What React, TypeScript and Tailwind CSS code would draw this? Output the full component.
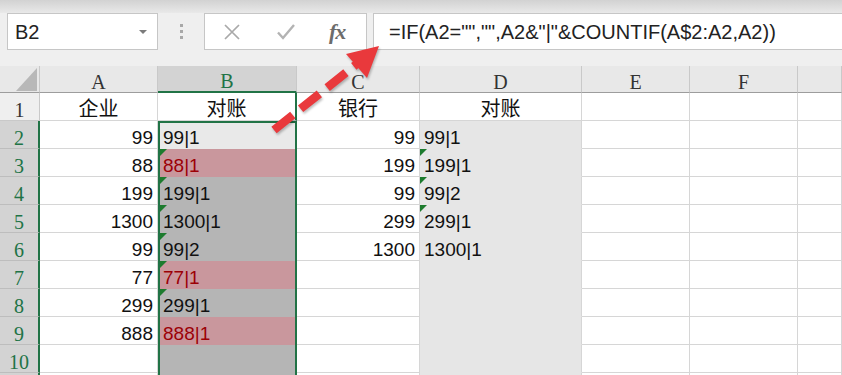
import React from 'react'

type Fill = 'active' | 'sel' | 'bad'

const colA = ['99', '88', '199', '1300', '99', '77', '299', '888', '', '']
const colB: [string, Fill, boolean][] = [
  ['99|1', 'active', false],
  ['88|1', 'bad', true],
  ['199|1', 'sel', true],
  ['1300|1', 'sel', true],
  ['99|2', 'sel', true],
  ['77|1', 'bad', true],
  ['299|1', 'sel', true],
  ['888|1', 'bad', false],
  ['', 'sel', false],
  ['', 'sel', false],
]
const colC = ['99', '199', '99', '299', '1300', '', '', '', '', '']
const colD: [string, boolean][] = [
  ['99|1', false],
  ['199|1', true],
  ['99|2', true],
  ['299|1', true],
  ['1300|1', false],
  ['', false],
  ['', false],
  ['', false],
  ['', false],
  ['', false],
]

const fillClass: Record<Fill, string> = {
  active: 'bg-[#e9e9e9] border-b-[#e9e9e9] text-[#111]',
  sel: 'bg-[#b5b5b5] border-b-[#b5b5b5] text-[#111]',
  bad: 'bg-[#c9979d] border-b-[#c9979d] text-[#9c0006]',
}

// little green "number stored as text" flag
const Flag = ({ left = 0 }: { left?: number }) => (
  <span
    className="absolute top-0 w-0 h-0 border-t-[7px] border-r-[7px] border-t-[#1d7b2e] border-r-transparent"
    style={{ left }}
  />
)

const Caret = () => (
  <svg width="10" height="6" viewBox="0 0 10 6">
    <path d="M1 1h8L5 5z" fill="#7b7b7b" />
  </svg>
)

const Toolbar = () => (
  <div className="h-[66px] bg-[#efefef] flex flex-col">
    <div className="h-[13px] bg-gradient-to-b from-[#d2d2d2] to-[#e9e9e9]" />
    <div className="flex h-[37px] pl-[7px]">
      <div className="w-[151px] h-full bg-white border border-[#c6c6c6] flex items-center justify-between pl-[7px] pr-[9px]">
        <span className="text-[20px] leading-none text-[#222]">B2</span>
        <Caret />
      </div>
      <div className="w-[46px] flex flex-col items-center justify-center gap-[3px]">
        <span className="w-[3px] h-[3px] bg-[#a8a8a8]" />
        <span className="w-[3px] h-[3px] bg-[#a8a8a8]" />
        <span className="w-[3px] h-[3px] bg-[#a8a8a8]" />
      </div>
      <div className="w-[163px] h-full bg-white border border-[#c6c6c6] flex items-center pl-[18px]">
        <svg width="18" height="18" viewBox="0 0 18 18">
          <path d="M2 2l14 14M16 2L2 16" stroke="#a9a9a9" strokeWidth="1.7" />
        </svg>
        <svg width="20" height="18" viewBox="0 0 20 18" className="ml-[35px]">
          <path d="M2 9.5l5 5.5L18 2" stroke="#b3b3b3" strokeWidth="2.4" fill="none" />
        </svg>
        <span className="ml-[33px] font-['Liberation_Serif'] italic font-bold text-[22px] leading-none text-[#6c6c6c] tracking-[-1px]">
          fx
        </span>
      </div>
      <div className="flex-1 h-full ml-[6px] -mr-[2px] bg-white border border-[#c6c6c6] flex items-center pl-[15px]">
        <span className="text-[20px] leading-none text-[#222] whitespace-pre">
          =IF(A2="","",A2&"|"&COUNTIF(A$2:A2,A2))
        </span>
      </div>
    </div>
  </div>
)

const colHead = 'flex items-end justify-center font-["Liberation_Serif"] text-[20px] leading-none border-r border-b border-r-[#c9c9c9] border-b-[#9d9d9d] bg-[#e8e8e8] text-[#333]'
const cell = 'relative border-r border-b border-[#d6d6d6] text-[19px] leading-none flex items-end pb-[1px]'

const Sheet = () => (
  <div className="relative grid grid-cols-[40px_118px_139px_123px_162px_108px_108px_44px] grid-rows-[27px] auto-rows-[28px] h-[309px] overflow-hidden">
    {/* corner */}
    <div className="relative bg-[#e8e8e8] border-r border-b border-r-[#c9c9c9] border-b-[#9d9d9d]">
      <svg width="21" height="23" viewBox="0 0 21 23" className="absolute left-[16px] top-[2px]">
        <path d="M21 0V23H0z" fill="#b8b8b8" />
      </svg>
    </div>
    <div className={colHead}>A</div>
    <div className={colHead + ' !bg-[#d3d3d3] !text-[#217346] !border-b-2 !border-b-[#217346]'}>B</div>
    <div className={colHead}>C</div>
    <div className={colHead}>D</div>
    <div className={colHead}>E</div>
    <div className={colHead}>F</div>
    <div className={colHead}></div>

    {/* row 1: titles */}
    <div className="flex items-end justify-center bg-[#efefef] border-r border-b border-r-[#c9c9c9] border-b-[#c9c9c9] font-['Liberation_Serif'] text-[20px] leading-none text-[#333]">
      1
    </div>
    {['企业', '对账', '银行', '对账'].map((t, i) => (
      <div
        key={i}
        className={
          cell +
          " justify-center font-['Noto_Sans_CJK_SC'] text-[20px] text-[#111] pb-[2px]" +
          (i === 1 ? ' border-r-2 border-r-[#217346]' : '')
        }
      >
        {t}
      </div>
    ))}
    <div className={cell} />
    <div className={cell} />
    <div className={cell} />

    {colA.map((a, r) => (
      <React.Fragment key={r}>
        <div className="flex items-end justify-center bg-[#d3d3d3] border-b border-b-[#bdbdbd] border-r-2 border-r-[#217346] font-['Liberation_Serif'] text-[20px] leading-none text-[#217346]">
          {r < 9 ? r + 2 : ''}
        </div>
        <div className={cell + ' justify-end pr-[4px] text-[#111]'}>{a}</div>
        <div className={cell + ' pl-[5px] ' + fillClass[colB[r][1]]}>
          {colB[r][2] && <Flag left={2} />}
          {colB[r][0]}
        </div>
        <div className={cell + ' justify-end pr-[4px] text-[#111]'}>{colC[r]}</div>
        <div className={cell + ' pl-[4px] bg-[#e6e6e6] border-b-[#e6e6e6] text-[#111]'}>
          {colD[r][1] && <Flag />}
          {colD[r][0]}
        </div>
        <div className={cell} />
        <div className={cell} />
        <div className={cell} />
      </React.Fragment>
    ))}

    {/* selection outline B2:B */}
    <div className="absolute left-[158px] top-[55px] w-[139px] h-[270px] border-2 border-[#217346] pointer-events-none" />
  </div>
)

const Arrow = () => (
  <svg
    width="842"
    height="375"
    viewBox="0 0 842 375"
    className="absolute inset-0 pointer-events-none drop-shadow-[1px_2px_1px_rgba(0,0,0,0.25)]"
  >
    <path d="M274 130L358 63" stroke="#e9393c" strokeWidth="8.5" strokeDasharray="24 10" />
    <path d="M379 46L346 54L367 78z" fill="#e9393c" />
  </svg>
)

export default function App() {
  return (
    <div className="relative w-[842px] h-[375px] overflow-hidden bg-white font-['Liberation_Sans',_'Noto_Sans_CJK_SC',_sans-serif]">
      <Toolbar />
      <Sheet />
      <Arrow />
    </div>
  )
}
